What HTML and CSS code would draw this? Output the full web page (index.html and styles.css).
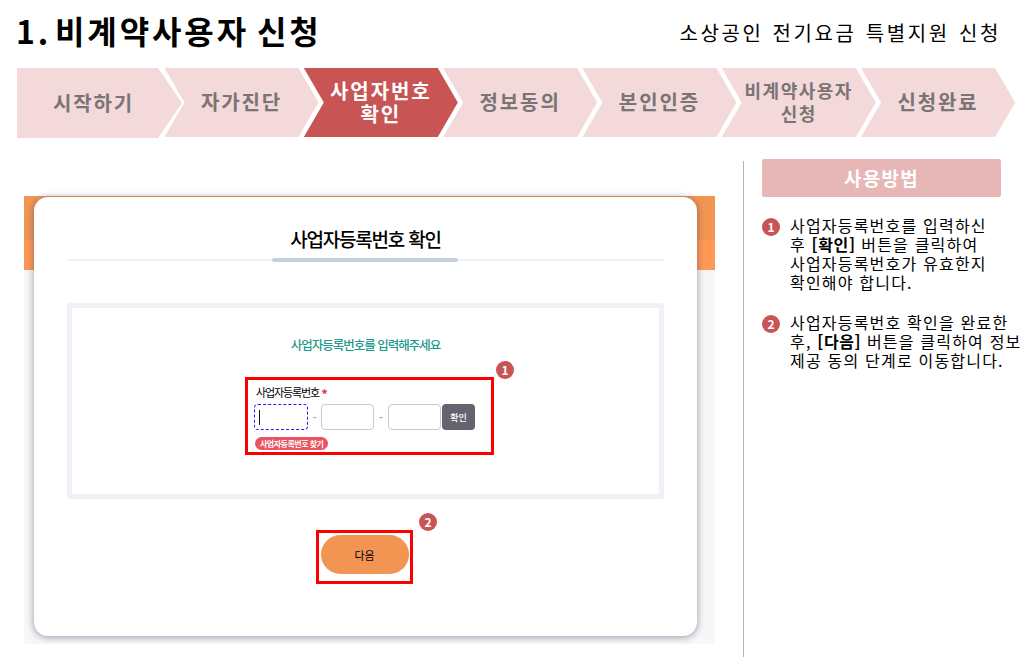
FILE: index.html
```html
<!DOCTYPE html>
<html lang="ko">
<head>
    <meta charset="UTF-8">
    <title>비계약사용자 신청</title>
    <link rel="stylesheet" href="styles.css">
</head>
<body>
    <header class="top-bar">
        <h1><span class="title-no">1.</span> 비계약사용자 신청</h1>
        <p class="top-sub">소상공인 전기요금 특별지원 신청</p>
    </header>

    <ol class="steps">
        <li class="step step-first">시작하기</li>
        <li class="step">자가진단</li>
        <li class="step step-on">사업자번호<br>확인</li>
        <li class="step">정보동의</li>
        <li class="step">본인인증</li>
        <li class="step step-small">비계약사용자<br>신청</li>
        <li class="step">신청완료</li>
    </ol>

    <div class="content">
        <main class="shot">
            <div class="shot-band"></div>
            <section class="card">
                <h2 class="card-title">사업자등록번호 확인</h2>
                <div class="title-rule"><span></span></div>

                <div class="form-box">
                    <p class="form-lead">사업자등록번호를 입력해주세요</p>
                    <div class="mark-box">
                        <span class="num num-form">1</span>
                        <label class="field-label">사업자등록번호 <i>*</i></label>
                        <div class="field-row">
                            <input class="biz-input biz-focus" type="text">
                            <span class="dash dash-first">-</span>
                            <input class="biz-input" type="text">
                            <span class="dash">-</span>
                            <input class="biz-input" type="text">
                            <button class="check-btn">확인</button>
                        </div>
                        <span class="find-tag">사업자등록번호 찾기</span>
                    </div>
                </div>

                <div class="next-wrap">
                    <div class="next-mark">
                        <span class="num num-next">2</span>
                        <button class="next-btn">다음</button>
                    </div>
                </div>
            </section>
        </main>

        <aside class="side">
            <div class="side-head">사용방법</div>
            <div class="side-item">
                <span class="num">1</span>
                <p>사업자등록번호를 입력하신<br>후 <b>[확인]</b> 버튼을 클릭하여<br>사업자등록번호가 유효한지<br>확인해야 합니다.</p>
            </div>
            <div class="side-item">
                <span class="num">2</span>
                <p>사업자등록번호 확인을 완료한<br>후, <b>[다음]</b> 버튼을 클릭하여 정보<br>제공 동의 단계로 이동합니다.</p>
            </div>
        </aside>
    </div>
</body>
</html>
```

FILE: styles.css
```css
* {
    box-sizing: border-box;
}
html, body {
    height: 100%;
}
body {
    margin: 0;
    padding: 0 0 0 17px;
    overflow: hidden;
    background: #fff;
    color: #000;
    font-family: "Noto Sans CJK KR", "Noto Sans", sans-serif;
}
.top-bar {
    display: flex;
    justify-content: space-between;
    align-items: center;
    height: 68px;
    padding: 0 31px 8px 0;
}
.top-bar h1 {
    margin: 0 0 0 -1px;
    font-size: 32px;
    line-height: 40px;
    font-weight: 700;
    letter-spacing: 2.9px;
    word-spacing: -4px;
}
.title-no {
    margin-right: -4px;
}
.top-sub {
    margin: 6px 0 0;
    font-size: 20px;
    line-height: 30px;
    letter-spacing: 2.6px;
    word-spacing: 1px;
}

.steps {
    display: flex;
    margin: 0;
    padding: 0;
    list-style: none;
}
.step {
    display: flex;
    align-items: center;
    justify-content: center;
    width: 154px;
    height: 69px;
    margin-right: -14.7px;
    padding: 0 6px 2px;
    background: #f3d9d9;
    color: #7a7474;
    font-size: 20px;
    line-height: 23px;
    font-weight: 700;
    letter-spacing: 1.9px;
    text-align: center;
    clip-path: polygon(0 0, 134px 0, 100% 50%, 134px 100%, 0 100%, 20px 50%);
}
.step-first {
    width: 165px;
    height: 70px;
    margin-right: -17.5px;
    clip-path: polygon(0 0, 141px 0, 100% 50%, 141px 100%, 0 100%);
    padding: 0 12px 2px 0;
}
.step-on {
    background: #c85454;
    color: #fff;
}
.step-small {
    font-size: 18px;
    letter-spacing: 1.5px;
}

.content {
    display: flex;
    height: 519px;
    margin-top: 23px;
}

.shot {
    position: relative;
    flex: none;
    width: 691px;
    height: 448px;
    margin: 35px 28px 0 7px;
    padding: 1px 18px 0 10px;
    background: #f7f7f8;
}
.shot-band {
    position: absolute;
    left: 0;
    top: 0;
    width: 100%;
    height: 74px;
    background: linear-gradient(#f29553 0, #f29553 44px, #ff9855 44px);
}
.card {
    position: relative;
    height: 439px;
    padding: 27px 33px 0;
    background: #fff;
    border-radius: 14px;
    box-shadow: 0 1px 6px 1px rgba(70, 70, 100, 0.45);
}
.card-title {
    margin: 0;
    font-size: 19px;
    line-height: 30px;
    font-weight: 500;
    text-align: center;
    letter-spacing: -1.2px;
}
.title-rule {
    display: flex;
    justify-content: center;
    height: 2px;
    margin-top: 5px;
    background: #eef1f6;
}
.title-rule span {
    width: 186px;
    height: 4px;
    margin: -1px 2px 0 0;
    border-radius: 2px;
    background: #c6cfdd;
}
.form-box {
    display: flex;
    flex-direction: column;
    align-items: center;
    height: 196px;
    margin-top: 42px;
    border: 5px solid #eef1f6;
    border-radius: 2px;
}
.form-lead {
    margin: 27px 0 0;
    color: #1c9a8b;
    font-size: 12.5px;
    line-height: 20px;
    font-weight: 500;
    letter-spacing: -1px;
}
.mark-box {
    position: relative;
    width: 249px;
    height: 78px;
    margin: 22px 0 0 8px;
    padding: 5px 0 0 8px;
    border: 3px solid #f00;
}
.field-label {
    display: block;
    font-size: 11px;
    line-height: 15px;
    letter-spacing: -1.1px;
}
.field-label i {
    color: #e0344e;
    font-size: 13px;
    line-height: 0;
    font-style: normal;
    font-weight: 700;
    vertical-align: -2px;
}
.field-row {
    display: flex;
    align-items: center;
    margin: 4px 0 0 -2px;
}
.biz-input {
    width: 53px;
    height: 26px;
    margin: 0;
    padding: 0;
    background: #fff;
    border: 1px solid #c9c9c9;
    border-radius: 4px;
}
.biz-focus {
    width: 54px;
    border: 1px dashed #1a1aff;
    background: linear-gradient(#111, #111) 4px 5px / 1px 15px no-repeat #fff;
}
.dash {
    width: 14px;
    color: #aaa;
    font-size: 11px;
    font-weight: 700;
    text-align: center;
}
.dash-first {
    width: 13px;
}
.check-btn {
    width: 33px;
    height: 26px;
    margin: 0 0 0 1px;
    padding: 0;
    border: 0;
    border-radius: 4px;
    background: #64636f;
    color: #fff;
    font-family: inherit;
    font-size: 9px;
    font-weight: 500;
}
.find-tag {
    display: inline-block;
    height: 13px;
    margin: 7px 0 0 -1px;
    padding: 0 5px;
    border-radius: 7px;
    background: #e8545f;
    color: #fff;
    font-size: 8px;
    line-height: 13px;
    font-weight: 700;
    letter-spacing: -0.5px;
    vertical-align: top;
}
.next-wrap {
    display: flex;
    justify-content: center;
    margin-top: 31px;
    padding-right: 2px;
}
.next-mark {
    position: relative;
    display: flex;
    justify-content: center;
    width: 97px;
    height: 54px;
    padding-top: 2px;
    border: 3px solid #f00;
}
.next-btn {
    width: 88px;
    height: 39px;
    padding: 0;
    border: 0;
    border-radius: 20px;
    background: #f29553;
    color: #000;
    font-family: inherit;
    font-size: 11px;
}

.num {
    display: flex;
    flex: none;
    align-items: center;
    justify-content: center;
    width: 18px;
    height: 18px;
    border-radius: 50%;
    background: #c85454;
    color: #fff;
    font-size: 12px;
    line-height: 18px;
    font-weight: 700;
}
.num-form {
    position: absolute;
    right: -23px;
    top: -19px;
}
.num-next {
    position: absolute;
    right: -27px;
    top: -20px;
}

.side {
    flex: none;
    width: 289px;
    height: 496px;
    padding: 0 0 0 18px;
    border-left: 1px solid #b4b4b4;
}
.side-head {
    width: 239px;
    height: 38px;
    margin-top: -2px;
    border-radius: 2px;
    background: #e7b6b6;
    color: #fff;
    font-size: 19px;
    line-height: 38px;
    font-weight: 700;
    text-align: center;
    letter-spacing: 1.3px;
}
.side-item {
    display: flex;
    gap: 10px;
    margin-top: 19px;
    margin-bottom: 21px;
}
.side-item .num {
    margin-top: 2px;
}
.side-item p {
    margin: 0;
    font-size: 16px;
    line-height: 19px;
    letter-spacing: 1.2px;
    white-space: nowrap;
}
.side-item b {
    letter-spacing: 0.6px;
}
```
